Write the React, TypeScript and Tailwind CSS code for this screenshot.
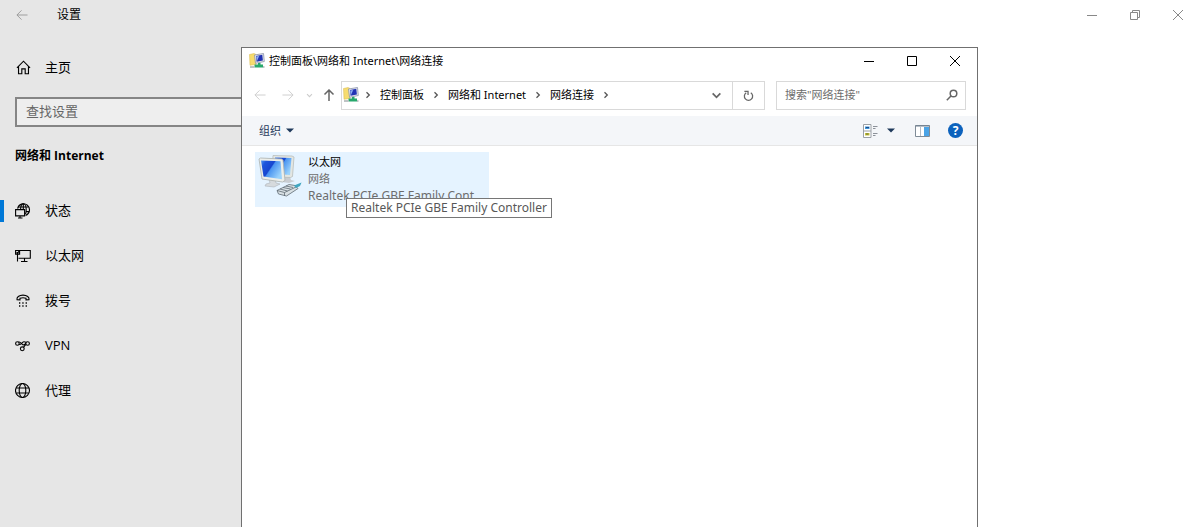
import type { ReactNode } from "react";

const segoe = "font-['Open_Sans','Noto_Sans_CJK_SC',sans-serif]";
const yahei = "font-['Noto_Sans','Noto_Sans_CJK_SC',sans-serif]";

function StatusIcon() {
  return (
    <svg width="16" height="16" viewBox="0 0 16 16" fill="none" stroke="currentColor" strokeWidth="1.1">
      <path d="M2.6 5.6A6 6 0 1 1 10.6 12.4" />
      <path d="M3.2 4h10.400M10.500 8.600h3.700M5.600 6C5.800 3 6.800.8 8.300.8s2.900 2.400 2.900 5.700c0 2-.2 3.500-.7 4.800M8.300.8V6" />
      <path d="M.6 6.600h9v6.300h-9zM5 12.900v2M3 15h4.500" />
    </svg>
  );
}

function EthernetIcon() {
  return (
    <svg width="16" height="16" viewBox="0 0 16 16" fill="none" stroke="currentColor" strokeWidth="1.1">
      <path d="M5 2.500h10.300v7.800H3.500M9.500 10.500v2.800M6 13.500h6.500M2.500 6v7.500" />
      <path d="M.6 2.500h4v3.600h-4zM1.600 4.300l1 .9 1.500-2" />
    </svg>
  );
}

function DialupIcon() {
  return (
    <svg width="16" height="16" viewBox="0 0 16 16" fill="none" stroke="currentColor" strokeWidth="1.1">
      <path d="M2 6.700C1.400 4.300 4 2.100 8 2.100s6.600 2.200 6 4.600l-3 .2V5.200c-2-.6-4-.6-6 0v1.700z" />
      <path d="M4 10h1.300M7.300 10h1.300M10.600 10h1.300M4 13h1.300M7.300 13h1.300M10.600 13h1.300" strokeWidth="1.300" />
    </svg>
  );
}

function VpnIcon() {
  return (
    <svg width="16" height="16" viewBox="0 0 16 16" fill="none" stroke="currentColor" strokeWidth="1.1">
      <circle cx="2.400" cy="5.500" r="1.800" />
      <circle cx="12.600" cy="5.500" r="1.800" />
      <circle cx="7.300" cy="10.800" r="1.900" />
      <path d="M3.600 4.100c2-1 3.400 2.800 5 2.800 1.200 0 1.500-1 2.300-1.600M4 6.400c2 .8 3.300-2.600 5-2.600 1 0 1.700.3 2.300.6M8.500 9.300l2.300-3" />
    </svg>
  );
}

function GlobeIcon() {
  return (
    <svg width="16" height="16" viewBox="0 0 16 16" fill="none" stroke="currentColor" strokeWidth="1.100">
      <circle cx="7.500" cy="7.500" r="7" />
      <ellipse cx="7.500" cy="7.500" rx="3.300" ry="7" />
      <path d="M1.200 5h12.600M1.200 10h12.600" />
    </svg>
  );
}

function HomeIcon() {
  return (
    <svg width="15" height="15" viewBox="0 0 16 16" fill="none" stroke="currentColor" strokeWidth="1.200">
      <path d="M1 8.300 8 1.300l7 7M2.700 7v7.700h3.500V9.500h3.600v5.200h3.500V7" />
    </svg>
  );
}

function NetworkFolderIcon() {
  return (
    <svg width="16" height="16" viewBox="0 0 16 16">
      <path d="M.5 1.500 5 .5l2 1v10l-6 .8z" fill="#f6dc6e" stroke="#d6b64a" strokeWidth=".5" />
      <path d="M5.500 2 14.500.5l.8 8-8.800 1.800z" fill="#e8eaf0" stroke="#8b93a8" strokeWidth=".8" />
      <path d="M7 3 13.300 1.800l.6 5.700-6.300 1.300z" fill="#2233b4" />
      <path d="m7.200 3.500 3-.6L8 8z" fill="#8fb0f2" />
      <path d="M9 10h2.500v1.500H14v3H5.500v-3H9z" fill="#27a86c" />
      <path d="M1 14h4.500M14 14h1.500" stroke="#a9b0b3" strokeWidth="1.500" />
    </svg>
  );
}

function AdapterIcon() {
  return (
    <svg className="shrink-0" width="44" height="46" viewBox="0 0 44 46">
      <defs>
        <linearGradient id="screen" x1="0" y1="0" x2="1" y2=".6">
          <stop offset="0" stopColor="#4f97f2" />
          <stop offset=".2" stopColor="#1d55dc" />
          <stop offset=".5" stopColor="#1746cf" />
          <stop offset=".55" stopColor="#4a94f0" />
          <stop offset="1" stopColor="#9ad2fc" />
        </linearGradient>
      </defs>
      <path d="M27 24h5l1 3 4 1-6 2-7-1z" fill="#c9cdd2" />
      <path d="m15 2.500 19 .5 2 1-1.500 19.500-2 1L14 24z" fill="#e3e6e2" stroke="#b3b8b5" strokeWidth=".7" />
      <path d="m17 4.500 16.500.5L32 22l-16-1z" fill="url(#screen)" />
      <path d="M11 26h6l1 4 4 1-6 3-9-1 1-2 4-1z" fill="#d6dadd" stroke="#adb2b8" strokeWidth=".6" />
      <path d="m1 6 1.500-1 21 1 1.500 1 2 20.500-2.500 1.500L4 26z" fill="#eceeea" stroke="#abb0ad" strokeWidth=".8" />
      <path d="m3 7.500 19.500.8 1.500 18L5.500 23.500z" fill="url(#screen)" />
      <g stroke="#5f6b74" strokeWidth=".8">
        <path d="m19 37.500 12-6 6 1 3 3-11.500 7.500-8-2z" fill="#d8e0e4" />
        <path d="m19 37.500 7.500 2L39 33.500M26.500 39.500v3.500M22 36l7.500 2M25 34.500l7.500 1.500M28 33l7 1.500" fill="none" />
      </g>
      <path d="m36 32.500 7.500-3-1.500 3.500-4 2z" fill="#41a6c0" />
    </svg>
  );
}

function Arrow({ className }: { className?: string }) {
  return (
    <svg className={className} width="12" height="12" viewBox="0 0 13 13" fill="none" stroke="currentColor">
      <path d="M12.500 6.500H1M6 1.500l-5 5 5 5" />
    </svg>
  );
}

function Chevron({ className, size = 8 }: { className: string; size?: number }) {
  return (
    <svg className={className} width={size} height={size} viewBox="0 0 8 8" fill="none" stroke="currentColor" strokeWidth="1.300">
      <path d="m2.500 1.200 2.800 2.800-2.800 2.800" />
    </svg>
  );
}

function Caret() {
  return (
    <svg width="8" height="5" viewBox="0 0 8 5" fill="#1e395b">
      <path d="M0 .5h8L4 4.500z" />
    </svg>
  );
}

const navItems: { label: string; icon: ReactNode; active?: boolean }[] = [
  { label: "状态", icon: <StatusIcon />, active: true },
  { label: "以太网", icon: <EthernetIcon /> },
  { label: "拨号", icon: <DialupIcon /> },
  { label: "VPN", icon: <VpnIcon /> },
  { label: "代理", icon: <GlobeIcon /> },
];

function SettingsWindow() {
  return (
    <div className={`flex min-h-screen text-[13px] text-black ${segoe}`}>
      <aside className="w-1/4 bg-[#e6e6e6]">
        <div className="flex h-[30px] items-center gap-[29px] pl-4 text-[12px]">
          <button aria-label="返回" className="text-[#999]">
            <Arrow />
          </button>
          <h1 className="leading-4">设置</h1>
        </div>
        <a href="#home" className="mt-[15px] flex h-[45px] items-center gap-[14px] pl-4">
          <HomeIcon />
          主页
        </a>
        <input
          type="search"
          aria-label="查找设置"
          placeholder="查找设置"
          className="mt-[7px] ml-[15px] block h-[30px] w-[270px] border-2 border-[#858585] bg-[#eee] px-[9px] pb-[2px] placeholder:text-[#666]"
        />
        <h2 className="mt-[17px] pl-[15px] text-[12px] leading-6 font-bold">网络和 Internet</h2>
        <nav className="mt-5">
          {navItems.map((item) => (
            <a key={item.label} href="#nav" className="flex h-[45px] items-center">
              <span className={`h-[22px] w-1 ${item.active ? "bg-[#0078d7]" : ""}`} />
              <span className="mr-[14px] ml-[11px]">{item.icon}</span>
              {item.label}
            </a>
          ))}
        </nav>
      </aside>
      <main className="flex-1 bg-white">
        <div className="flex h-[30px] justify-end pr-px text-[#888]">
          <button aria-label="最小化" className="flex w-[43px] items-center justify-center">
            <svg width="10" height="10" viewBox="0 0 10 10" stroke="currentColor">
              <path d="M0 5.500h10" />
            </svg>
          </button>
          <button aria-label="还原" className="flex w-[43px] items-center justify-center">
            <svg width="10" height="10" viewBox="0 0 10 10" fill="none" stroke="currentColor">
              <path d="M.5 2.500h7v7h-7zM2.500 2.500v-2h7v7h-2" />
            </svg>
          </button>
          <button aria-label="关闭" className="flex w-[43px] items-center justify-center">
            <svg width="10" height="10" viewBox="0 0 10 10" stroke="currentColor">
              <path d="m0 0 10 10M10 0 0 10" />
            </svg>
          </button>
        </div>
      </main>
    </div>
  );
}

function TitleBar() {
  return (
    <header className="flex h-7 items-stretch pr-px pb-[2px]">
      <div className="flex flex-1 items-center gap-1 pl-[7px] text-black">
        <NetworkFolderIcon />
        <h2 className="leading-4">控制面板\网络和 Internet\网络连接</h2>
      </div>
      <button aria-label="最小化" className="flex w-[43px] items-center justify-center">
        <svg width="10" height="10" viewBox="0 0 10 10" stroke="#000">
          <path d="M0 5.500h10" />
        </svg>
      </button>
      <button aria-label="最大化" className="flex w-[43px] items-center justify-center">
        <svg width="10" height="10" viewBox="0 0 10 10" fill="none" stroke="#000">
          <path d="M.5.5h9v9h-9z" />
        </svg>
      </button>
      <button aria-label="关闭" className="flex w-[43px] items-center justify-center">
        <svg width="10" height="10" viewBox="0 0 10 10" stroke="#000">
          <path d="m0 0 10 10M10 0 0 10" />
        </svg>
      </button>
    </header>
  );
}

function AddressRow() {
  return (
    <div className="flex h-10 items-center pr-[11px] pb-[2px] pl-3">
      <button aria-label="后退" className="w-7 text-[#ccc]">
        <Arrow />
      </button>
      <button aria-label="前进" className="w-6 text-[#ccc]">
        <Arrow className="rotate-180" />
      </button>
      <button aria-label="最近浏览的位置" className="w-[17px] text-[#ccc]">
        <Chevron className="rotate-90" size={7} />
      </button>
      <button aria-label="向上" className="w-[18px] text-[#666]">
        <svg width="12" height="12" viewBox="0 0 12 12" fill="none" stroke="currentColor" strokeWidth="1.500">
          <path d="M6 12V1M1.500 5.500 6 1l4.500 4.500" />
        </svg>
      </button>
      <div className="flex h-[29px] flex-1 items-center border border-[#d9d9d9] pl-px">
        <NetworkFolderIcon />
        <nav className="flex flex-1 items-center gap-2 pb-px pl-[5px] text-black">
          {["控制面板", "网络和 Internet", "网络连接"].map((part) => (
            <span key={part} className="flex items-center gap-2">
              <Chevron className="text-[#555]" />
              <a href="#path" className="leading-4">{part}</a>
            </span>
          ))}
          <Chevron className="text-[#555]" />
        </nav>
        <button aria-label="上一个位置" className="flex h-full w-8 items-center justify-center text-[#666]">
          <Chevron className="rotate-90" size={11} />
        </button>
        <button aria-label="刷新" className="flex h-full w-8 items-center justify-center border-l border-[#d9d9d9]">
          <svg width="11" height="11" viewBox="0 0 12 12" fill="none" stroke="#666" strokeWidth="1.400">
            <path d="M8.500 3A4.500 4.500 0 1 1 3.500 3M1.500 1.500h4v4" />
          </svg>
        </button>
      </div>
      <div className="ml-[11px] flex h-[29px] w-[190px] items-center border border-[#d9d9d9] pr-[7px] pl-2">
        <input
          type="search"
          aria-label="搜索网络连接"
          placeholder={'搜索"网络连接"'}
          className="min-w-0 flex-1 placeholder:text-[#6d6d6d]"
        />
        <button aria-label="搜索">
          <svg width="12" height="12" viewBox="0 0 12 12" fill="none" stroke="#666" strokeWidth="1.500">
            <circle cx="7.500" cy="4.500" r="3.300" />
            <path d="M5.200 6.800.8 11.200" />
          </svg>
        </button>
      </div>
    </div>
  );
}

function CommandBar() {
  return (
    <div className="flex h-[30px] items-center border-b border-[#e6e6e6] bg-[#f4f6f9] pr-[14px] pl-[17px]">
      <button className="flex items-center gap-[5px] leading-4 text-[#1e395b]">
        组织
        <Caret />
      </button>
      <button aria-label="更改视图" className="ml-auto flex items-center gap-[9px]">
        <svg width="15" height="14" viewBox="0 0 15 14">
          <path d="M.5.500h7.500v13H.5z" fill="#fff" stroke="#9ba0a6" />
          <path d="M1 7h7" stroke="#9ba0a6" />
          <path d="M2 2.500h4.500v2.500H2z" fill="#3f95d8" />
          <path d="M3 3.500h3" stroke="#1c4a8a" />
          <path d="M2 9h4.500v2.500H2z" fill="#c9c23f" />
          <path d="M3 10h2.500" stroke="#5f6a2a" />
          <path d="M10 2.500h4.500M10 4.500h2.500M10 9.500h4.500M10 11.500h2.500" stroke="#8c9199" />
        </svg>
        <Caret />
      </button>
      <button aria-label="预览窗格" className="ml-5">
        <svg width="15" height="12" viewBox="0 0 15 12">
          <path d="M.5.500h14v11H.5z" fill="#fff" stroke="#7f8b97" />
          <path d="M.5 1h14" stroke="#6f7f8f" />
          <path d="M9 2h5v9H9z" fill="#4aa3e6" />
          <path d="M5.500 1v10" stroke="#b5bcc4" />
        </svg>
      </button>
      <button
        aria-label="帮助"
        className="ml-[18px] flex size-[15px] items-center justify-center rounded-full bg-[#0c62bd] text-[12px] leading-none font-bold text-white"
      >
        ?
      </button>
    </div>
  );
}

function ExplorerWindow() {
  return (
    <section
      className={`absolute top-[47px] right-[222px] bottom-0 left-[241px] border border-b-0 border-[#707070] bg-white text-[11px] ${yahei}`}
    >
      <TitleBar />
      <AddressRow />
      <CommandBar />
      <div className="px-[13px] pt-[6px]">
        <a href="#ethernet" className="relative flex h-[55px] w-[234px] bg-[#e5f3ff] pt-[1px] pl-[3px]">
          <AdapterIcon />
          <span className="ml-[6px] w-[178px] leading-[17px] text-[#6d6d6d]">
            <span className="block text-black">以太网</span>
            <span className="block">网络</span>
            <span className="block truncate text-[12px]">Realtek PCIe GBE Family Controller</span>
          </span>
          <span
            role="tooltip"
            className="absolute top-[46px] left-[91px] border border-[#767676] bg-white px-1 text-[12px] leading-[18px] whitespace-nowrap text-[#575757]"
          >
            Realtek PCIe GBE Family Controller
          </span>
        </a>
      </div>
    </section>
  );
}

export default function App() {
  return (
    <div className="relative overflow-hidden">
      <SettingsWindow />
      <ExplorerWindow />
    </div>
  );
}
